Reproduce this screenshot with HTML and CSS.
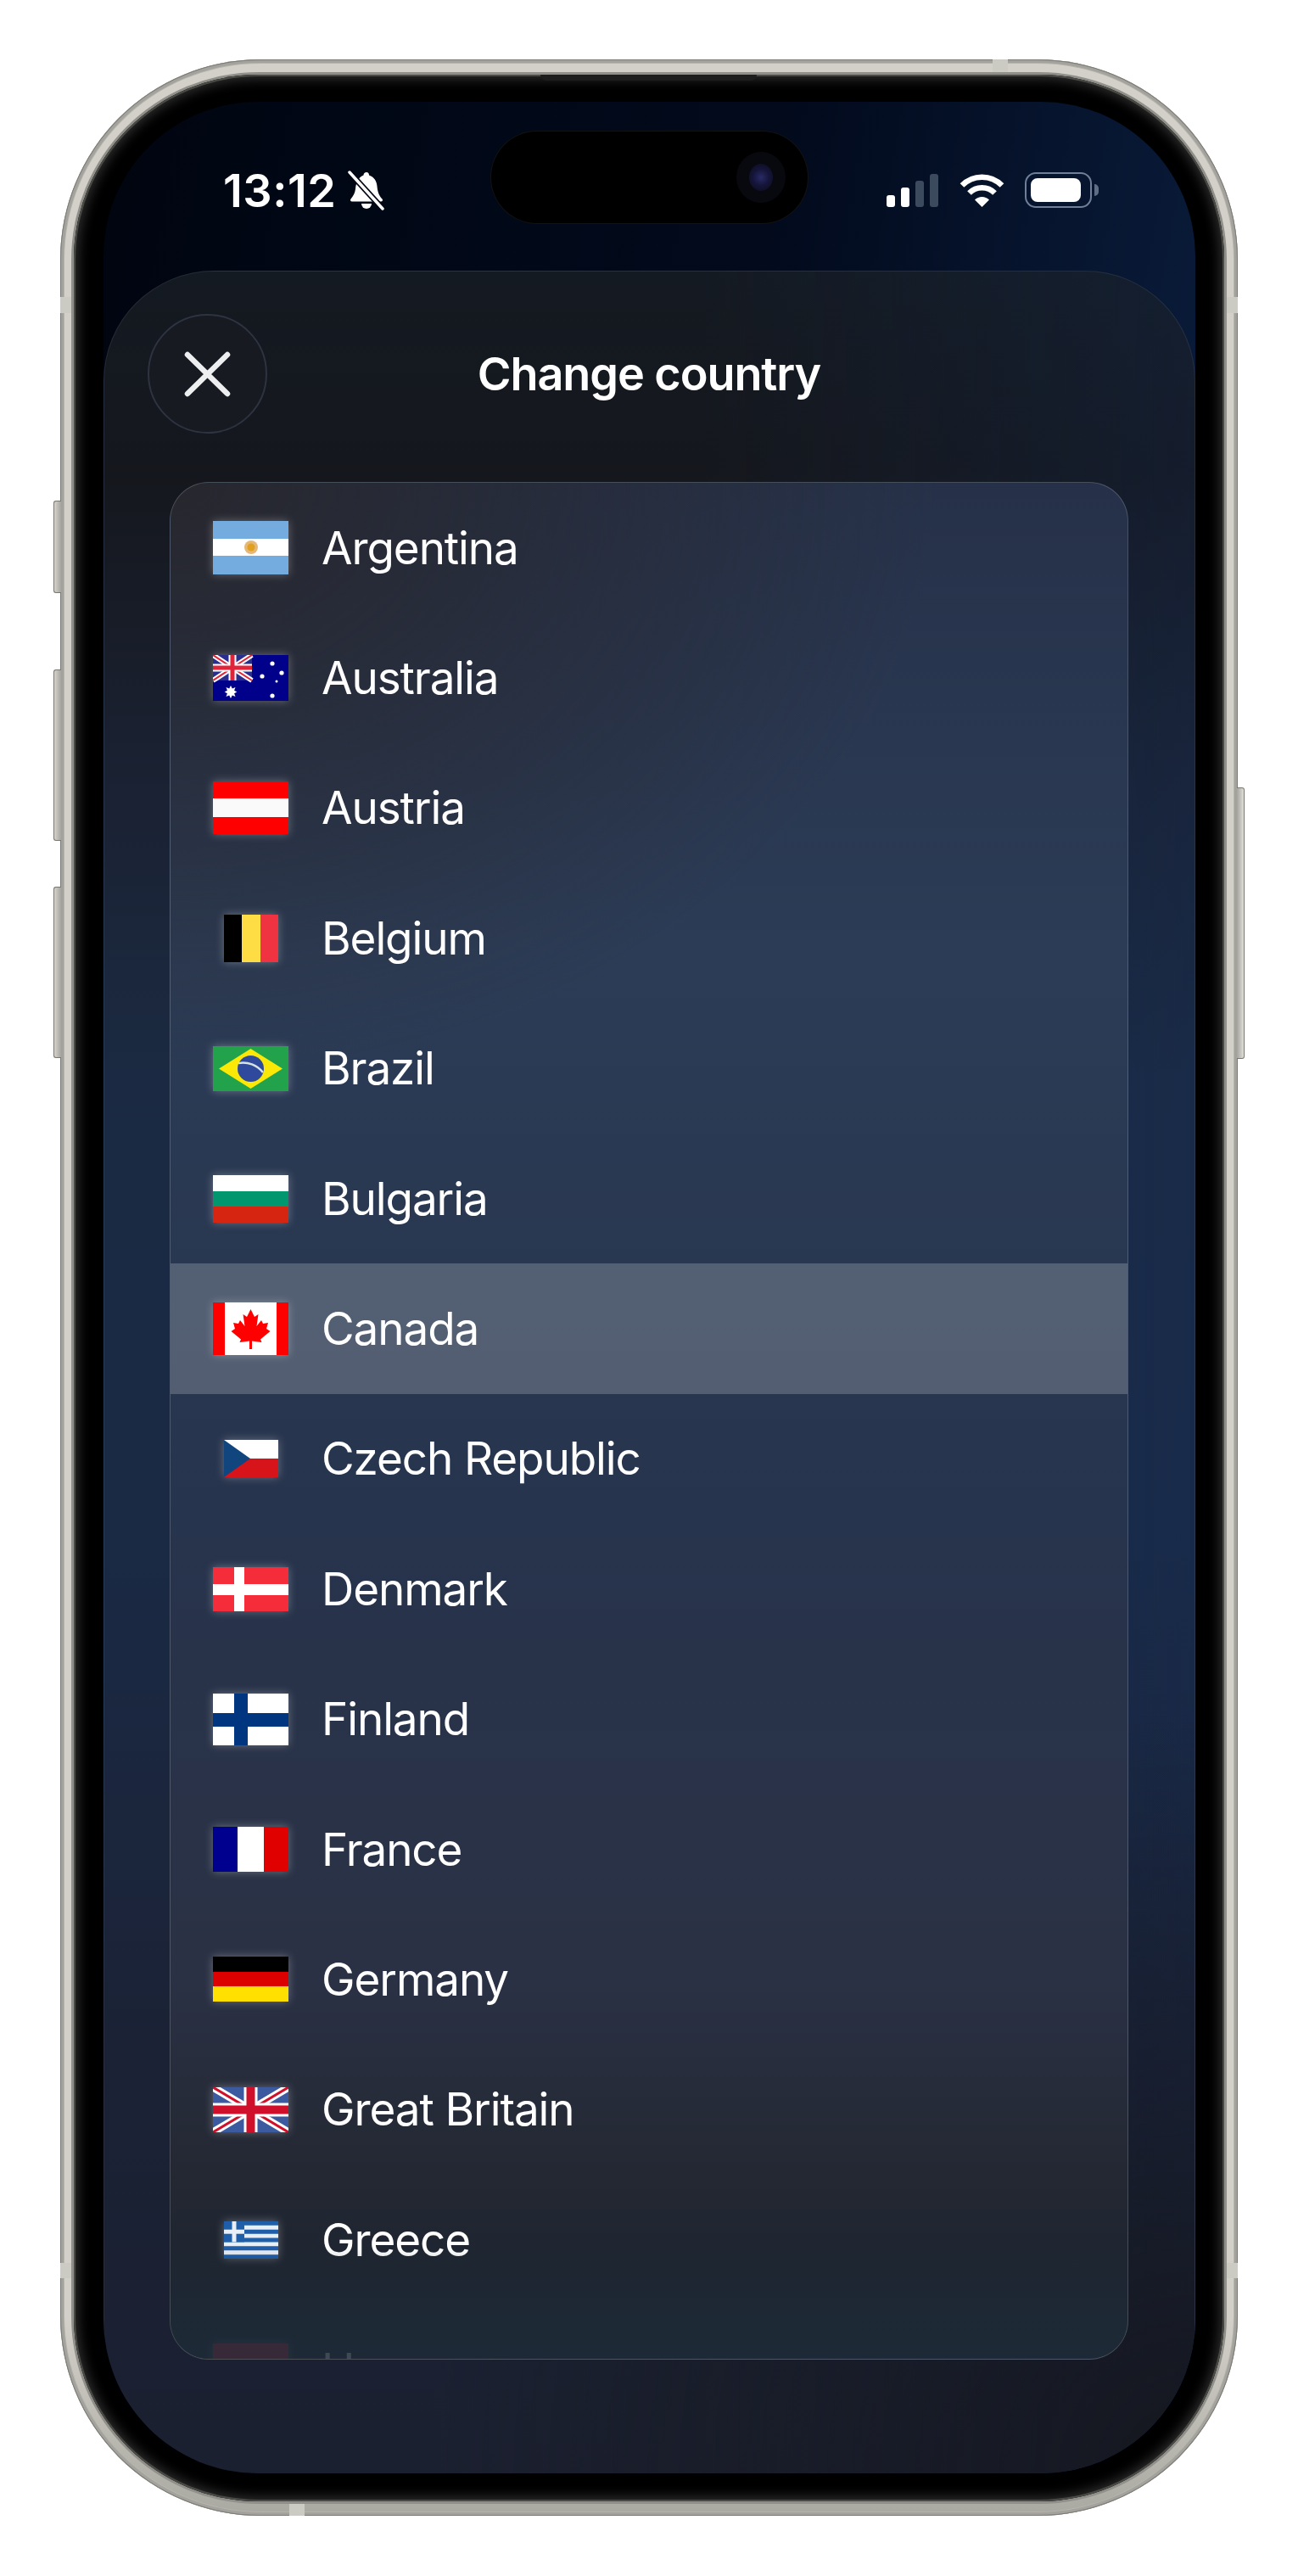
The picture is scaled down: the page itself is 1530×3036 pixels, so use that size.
FILE: index.html
```html
<!DOCTYPE html>
<html lang="en">
  <head>
    <meta charset="UTF-8" />
    <title>Change country</title>
    <link rel="stylesheet" href="styles.css">
  </head>
  <body>
    <div class="phone">
      <span class="side-btn btn-mute"></span>
      <span class="side-btn btn-up"></span>
      <span class="side-btn btn-down"></span>
      <span class="side-btn btn-power"></span>
      <span class="antenna ant-top"></span>
      <span class="antenna ant-bottom"></span>
      <span class="antenna ant-left"></span>
      <span class="antenna ant-right"></span>
      <span class="antenna ant-left-low"></span>
      <span class="antenna ant-right-low"></span>

      <div class="bezel">
        <span class="speaker"></span>
        <div class="screen">
          <div class="status">
            <div class="status-left">
              <span class="time">13:12</span>
              <svg class="bell" width="43" height="47" viewBox="0 0 43 47">
                <path fill="#fff" d="M22 2c2 0 3 1.500 3 3.500 6 2 9 7 9.500 13 .5 6 2 11 6 15 1 1.500 .5 3-1.500 3H5c-2 0-2.500-1.500-1.500-3 3-3.500 5-7 5.500-12 .5-7 4-14 9.500-16 0-2 1.500-3.500 3.500-3.500z" />
                <path fill="#fff" d="M16 39h12a6 6 0 0 1-12 0z" />
                <path stroke="#000612" stroke-width="7" d="M1 1l41 45" />
                <path stroke="#fff" stroke-width="3.500" stroke-linecap="round" d="M2 2l39 43" />
              </svg>
            </div>
            <div class="island">
              <span class="camera"><span class="lens"></span></span>
            </div>
            <div class="status-right">
              <div class="signal">
                <span class="bar bar-1"></span>
                <span class="bar bar-2"></span>
                <span class="bar bar-3"></span>
                <span class="bar bar-4"></span>
              </div>
              <svg class="wifi" width="53" height="39" viewBox="0 0 53 39" fill="none">
                <path stroke="#fff" stroke-width="6.500" d="M3 13.500A33 33 0 0 1 50 13.500" />
                <path stroke="#fff" stroke-width="6.500" d="M11.500 22.500A21 21 0 0 1 41.500 22.500" />
                <path fill="#fff" d="M26.500 39L18 30.500A12 12 0 0 1 35 30.500z" />
              </svg>
              <div class="battery"><span class="battery-fill"></span></div>
              <span class="battery-cap"></span>
            </div>
          </div>

          <div class="sheet">
            <div class="sheet-header">
              <button class="close">
                <svg width="55" height="54" viewBox="0 0 55 54">
                  <path stroke="#eceef0" stroke-width="6.500" stroke-linecap="round" d="M4 4l47 46M51 4L4 50" />
                </svg>
              </button>
              <h1>Change country</h1>
            </div>

            <div class="list">
              <div class="row">
                <div class="flag">
                  <svg width="89" height="63" viewBox="0 0 89 63">
                    <rect width="89" height="63" fill="#74acdf" />
                    <rect y="21" width="89" height="20" fill="#fff" />
                    <circle cx="45" cy="31" r="8" fill="#e6b878" />
                    <circle cx="45" cy="31" r="4.500" fill="#e0a020" />
                  </svg>
                </div>
                <span>Argentina</span>
              </div>

              <div class="row">
                <div class="flag">
                  <svg width="89" height="54" viewBox="0 0 89 54">
                    <rect width="89" height="54" fill="#00008b" />
                    <rect width="46" height="30" fill="#2a2f8f" />
                    <path stroke="#fff" stroke-width="6" d="M0 0l46 30M46 0L0 30" />
                    <path stroke="#e0243a" stroke-width="2" d="M0 0l46 30M46 0L0 30" />
                    <path stroke="#fff" stroke-width="9" d="M23 0v30M0 15h46" />
                    <path stroke="#e0243a" stroke-width="5" d="M23 0v30M0 15h46" />
                    <circle cx="70" cy="10" r="2.600" fill="#fff" />
                    <circle cx="58" cy="25" r="2.600" fill="#fff" />
                    <circle cx="81" cy="21" r="2.600" fill="#fff" />
                    <circle cx="75" cy="31" r="1.500" fill="#fff" />
                    <circle cx="70" cy="48" r="2.600" fill="#fff" />
                    <path fill="#fff" d="M21 36l1.800 3.400 3.700-1.400-1.400 3.700 3.200 1.800-3.200 1.800 1.400 3.700-3.700-1.400-1.800 3.400-1.800-3.400-3.700 1.400 1.400-3.700-3.200-1.800 3.200-1.800-1.400-3.700 3.700 1.400z" />
                  </svg>
                </div>
                <span>Australia</span>
              </div>

              <div class="row">
                <div class="flag">
                  <svg width="89" height="62" viewBox="0 0 89 62">
                    <rect width="89" height="62" fill="#f00" />
                    <rect y="20" width="89" height="22" fill="#fafafa" />
                  </svg>
                </div>
                <span>Austria</span>
              </div>

              <div class="row">
                <div class="flag">
                  <svg width="64" height="56" viewBox="0 0 64 56">
                    <rect width="21" height="56" fill="#000" />
                    <rect x="21" width="22" height="56" fill="#fddc44" />
                    <rect x="43" width="21" height="56" fill="#ef3340" />
                  </svg>
                </div>
                <span>Belgium</span>
              </div>

              <div class="row">
                <div class="flag">
                  <svg width="89" height="53" viewBox="0 0 89 53">
                    <rect width="89" height="53" fill="#22a24a" />
                    <path fill="#fbe806" d="M44.500 3L82 26.500 44.500 50 7 26.500z" />
                    <circle cx="44.500" cy="26.500" r="15.500" fill="#2f4a9c" />
                    <path fill="none" stroke="#d5e2e0" stroke-width="2.500" d="M30 20c11-2 22 2 29 11" />
                  </svg>
                </div>
                <span>Brazil</span>
              </div>

              <div class="row">
                <div class="flag">
                  <svg width="89" height="56" viewBox="0 0 89 56">
                    <rect width="89" height="19" fill="#fff" />
                    <rect y="19" width="89" height="18" fill="#00966e" />
                    <rect y="37" width="89" height="19" fill="#d62612" />
                  </svg>
                </div>
                <span>Bulgaria</span>
              </div>

              <div class="row row-active">
                <div class="flag">
                  <svg width="89" height="62" viewBox="0 0 89 62">
                    <rect width="89" height="62" fill="#f00" />
                    <rect x="14" width="61" height="62" fill="#fff" />
                    <path fill="#f00" d="M44.500 8L49 17l4.500-3-2 14L57 21l2 4 6-1-2 7 4.500 3L56 43.500l1.500 3.500L46 45.500V55h-3v-9.500L31.500 47l1.500-3.500L21.500 34l4.500-3-2-7 6 1 2-4 5.500 7-2-14 4.500 3z" />
                  </svg>
                </div>
                <span>Canada</span>
              </div>

              <div class="row">
                <div class="flag">
                  <svg width="64" height="44" viewBox="0 0 64 44">
                    <rect width="64" height="22" fill="#fff" />
                    <rect y="22" width="64" height="22" fill="#d7141a" />
                    <path fill="#11457e" d="M0 0l31 22L0 44z" />
                  </svg>
                </div>
                <span>Czech Republic</span>
              </div>

              <div class="row">
                <div class="flag">
                  <svg width="89" height="52" viewBox="0 0 89 52">
                    <rect width="89" height="52" fill="#f52c3a" />
                    <rect x="25" width="12" height="52" fill="#fff" />
                    <rect y="20" width="89" height="13" fill="#fff" />
                  </svg>
                </div>
                <span>Denmark</span>
              </div>

              <div class="row">
                <div class="flag">
                  <svg width="89" height="61" viewBox="0 0 89 61">
                    <rect width="89" height="61" fill="#fff" />
                    <rect x="25" width="16" height="61" fill="#003580" />
                    <rect y="23" width="89" height="16" fill="#003580" />
                  </svg>
                </div>
                <span>Finland</span>
              </div>

              <div class="row">
                <div class="flag">
                  <svg width="89" height="53" viewBox="0 0 89 53">
                    <rect width="29" height="53" fill="#00008f" />
                    <rect x="29" width="31" height="53" fill="#fff" />
                    <rect x="60" width="29" height="53" fill="#e00000" />
                  </svg>
                </div>
                <span>France</span>
              </div>

              <div class="row">
                <div class="flag">
                  <svg width="89" height="53" viewBox="0 0 89 53">
                    <rect width="89" height="18" fill="#000" />
                    <rect y="18" width="89" height="17" fill="#dd0000" />
                    <rect y="35" width="89" height="18" fill="#ffe000" />
                  </svg>
                </div>
                <span>Germany</span>
              </div>

              <div class="row">
                <div class="flag">
                  <svg width="89" height="53" viewBox="0 0 89 53">
                    <rect width="89" height="53" fill="#3c5a9f" />
                    <path stroke="#fff" stroke-width="9" d="M0 0l89 53M89 0L0 53" />
                    <path stroke="#d0102a" stroke-width="3" d="M0 0l89 53M89 0L0 53" />
                    <path stroke="#fff" stroke-width="16" d="M44.500 0v53M0 26.500h89" />
                    <path stroke="#d0102a" stroke-width="10" d="M44.500 0v53M0 26.500h89" />
                  </svg>
                </div>
                <span>Great Britain</span>
              </div>

              <div class="row">
                <div class="flag">
                  <svg width="64" height="44" viewBox="0 0 64 44">
                    <rect width="64" height="44" fill="#e8eef6" />
                    <path stroke="#1f5ea8" stroke-width="4.900" d="M0 2.400h64M0 12.200h64M0 22h64M0 31.800h64M0 41.600h64" />
                    <rect width="24" height="24.400" fill="#1f5ea8" />
                    <rect x="9.500" width="5" height="24.400" fill="#e8eef6" />
                    <rect y="9.700" width="24" height="5" fill="#e8eef6" />
                  </svg>
                </div>
                <span>Greece</span>
              </div>

              <div class="row">
                <div class="flag">
                  <svg width="89" height="62" viewBox="0 0 89 62">
                    <rect width="89" height="21" fill="#cd2a3e" />
                    <rect y="21" width="89" height="20" fill="#fff" />
                    <rect y="41" width="89" height="21" fill="#436f4d" />
                  </svg>
                </div>
                <span>Hungary</span>
              </div>

              <div class="list-fade"></div>
            </div>
          </div>
        </div>
      </div>
    </div>
  </body>
</html>
```

FILE: styles.css
```css
* {
  box-sizing: border-box;
}

body {
  margin: 0;
  height: 3036px;
  background-color: #fff;
  font-family: Inter, "Liberation Sans", sans-serif;
  color: #fff;
  overflow: hidden;
}

/* titanium frame */
.phone {
  position: relative;
  margin: 70px 0 0 71px;
  width: 1388px;
  height: 2895px;
  padding: 18px 16px 17px;
  border-radius: 236px;
  background: linear-gradient(180deg, #d2d0c8 0, #d2d0c8 92%, #a9a8a1 100%);
  box-shadow: inset 0 0 0 1px #7c7b75, inset 0 0 0 4px #a3a29c, inset 0 0 0 5px #b5b4ad;
}

.side-btn {
  position: absolute;
  width: 9px;
  background: linear-gradient(90deg, #d5d3cc, #a5a49e);
  border: 1px solid #77766f;
  border-radius: 3px 0 0 3px;
  border-right: none;
}

.btn-mute {
  left: -8px;
  top: 520px;
  height: 109px;
}

.btn-up {
  left: -8px;
  top: 719px;
  height: 202px;
}

.btn-down {
  left: -8px;
  top: 975px;
  height: 202px;
}

.btn-power {
  right: -8px;
  top: 858px;
  height: 320px;
  border-radius: 0 3px 3px 0;
  border-right: 1px solid #77766f;
  border-left: none;
  background: linear-gradient(90deg, #a5a49e, #e0dfd9);
}

.antenna {
  position: absolute;
  background-color: #cbcac3;
}

.ant-top {
  left: 1099px;
  top: 0;
  width: 18px;
  height: 18px;
}

.ant-bottom {
  left: 270px;
  bottom: 0;
  width: 18px;
  height: 17px;
}

.ant-left {
  left: 0;
  top: 280px;
  width: 16px;
  height: 19px;
}

.ant-right {
  right: 0;
  top: 280px;
  width: 16px;
  height: 19px;
}

.ant-left-low {
  left: 0;
  top: 2597px;
  width: 16px;
  height: 18px;
}

.ant-right-low {
  right: 0;
  top: 2597px;
  width: 16px;
  height: 18px;
}

.bezel {
  position: relative;
  height: 100%;
  padding: 32px 34px 33px 35px;
  border-radius: 218px;
  background-color: #000;
  box-shadow: 0 0 0 3px #908f89, inset 0 0 0 2px #4a4a46, inset 0 0 14px 5px #303030;
}

.speaker {
  position: absolute;
  left: 550px;
  top: 0;
  width: 255px;
  height: 7px;
  border-radius: 0 0 8px 8px;
  background-color: #1d1d1e;
}

.screen {
  display: flex;
  flex-direction: column;
  height: 100%;
  border-radius: 182px;
  overflow: hidden;
  background: linear-gradient(100deg, #000510 0%, #020a1c 45%, #0a1c3b 78%, #10274d 100%);
}

/* status bar */
.status {
  display: grid;
  grid-template-columns: 1fr 375px 1fr;
  flex: 0 0 199px;
  padding-top: 34px;
}

.status-left {
  display: flex;
  align-items: center;
  gap: 14px;
  height: 47px;
  margin-top: 47px;
  padding-left: 141px;
}

.time {
  font-size: 54px;
  font-weight: 600;
  letter-spacing: 0.500px;
  line-height: 1;
}

.island {
  display: flex;
  justify-content: flex-end;
  align-items: center;
  height: 110px;
  padding-right: 26px;
  border-radius: 55px;
  background-color: #000;
  border: 1px solid rgba(255, 255, 255, 0.07);
}

.camera {
  display: flex;
  justify-content: center;
  align-items: center;
  width: 58px;
  height: 60px;
  border-radius: 50%;
  background-color: #08080f;
}

.lens {
  width: 28px;
  height: 32px;
  border-radius: 50%;
  background: radial-gradient(circle at 50% 50%, #2a2a66 0, #15153a 45%, #0a0a18 100%);
}

.status-right {
  display: flex;
  justify-content: flex-end;
  align-items: center;
  height: 42px;
  margin-top: 49px;
  padding-right: 114px;
}

.signal {
  display: flex;
  align-items: flex-end;
  gap: 6.500px;
  height: 39px;
  margin-right: 25px;
}

.bar {
  width: 10.500px;
  border-radius: 3px;
  background-color: #fff;
}

.bar-1 {
  height: 14px;
}

.bar-2 {
  height: 23px;
}

.bar-3 {
  height: 31px;
  background-color: #3b4a5c;
}

.bar-4 {
  height: 39px;
  background-color: #3b4a5c;
}

.wifi {
  margin-right: 24px;
}

.battery {
  width: 79px;
  height: 42px;
  padding: 5px;
  border: 2.500px solid #6f7f95;
  border-radius: 13px;
}

.battery-fill {
  display: block;
  width: 59px;
  height: 100%;
  border-radius: 8px;
  background-color: #fff;
}

.battery-cap {
  width: 5px;
  height: 14px;
  margin-left: 3px;
  border-radius: 0 5px 5px 0;
  background-color: #5f6e84;
}

/* sheet */
.sheet {
  flex: 1;
  padding: 0 78px 0 77px;
  border: 1px solid rgba(255, 255, 255, 0.08);
  border-bottom: none;
  border-radius: 130px 130px 0 0;
  background:
    radial-gradient(ellipse 900px 900px at 100% 100%, rgba(21, 21, 26, 0.85), transparent),
    linear-gradient(90deg, transparent 55%, rgba(18, 45, 90, 0.25)),
    linear-gradient(180deg, #141a22 0, #15171d 9%, #1a2131 22%, #1b2a42 37%, #1a2a45 57%, #1b2236 80%, #1b2030 100%);
}

.sheet-header {
  position: relative;
  display: flex;
  justify-content: center;
  align-items: center;
  height: 141px;
  margin: 50px 0 57px;
}

.sheet-header h1 {
  margin: 0;
  font-size: 54px;
  font-weight: 600;
  letter-spacing: -1.100px;
}

.close {
  position: absolute;
  left: -26px;
  top: 0;
  display: flex;
  justify-content: center;
  align-items: center;
  width: 141px;
  height: 141px;
  padding: 0;
  border: 2px solid #2d3340;
  border-radius: 50%;
  background-color: #171a21;
}

/* country list */
.list {
  position: relative;
  height: 2213px;
  border: 1px solid rgba(255, 255, 255, 0.18);
  border-radius: 46px;
  overflow: hidden;
  background:
    radial-gradient(ellipse 900px 700px at 0 0, #27272e 0, transparent 100%),
    linear-gradient(180deg, #263149 0, #2c3c56 25%, #27344d 55%, #2a3144 80%, #242833 90%, #1d2530 96%, #1d2936 100%);
}

.row {
  display: flex;
  align-items: center;
  gap: 39px;
  height: 153.400px;
  padding-left: 50px;
  font-size: 53px;
  letter-spacing: -1.100px;
}

.row-active {
  background-color: rgba(255, 255, 255, 0.2);
}

.flag {
  display: flex;
  justify-content: center;
  width: 89px;
}

.flag svg {
  display: block;
  box-shadow: 0 0 10px rgba(255, 255, 255, 0.3);
}

.list-fade {
  position: absolute;
  left: 0;
  right: 0;
  bottom: 0;
  height: 130px;
  background: linear-gradient(180deg, rgba(29, 41, 54, 0) 0, rgba(29, 41, 54, 0.85) 70%, rgba(29, 41, 54, 0.85) 100%);
}
```
